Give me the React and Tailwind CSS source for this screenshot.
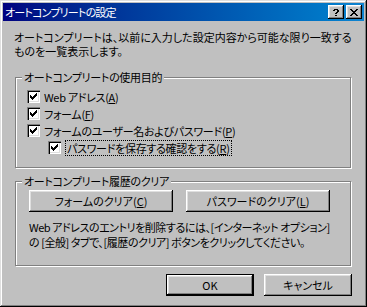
import React from "react";

const px = (cells) =>
  cells.map(([x, y, w = 1], i) => <rect key={i} x={x} y={y} width={w} height={1} />);

function CheckMark() {
  const cells = [
    [6, 0], [5, 1, 2], [0, 2], [4, 2, 3], [0, 3, 2], [3, 3, 3], [0, 4, 5], [1, 5, 3], [2, 6],
  ];
  return (
    <svg width="7" height="7" viewBox="0 0 7 7" shapeRendering="crispEdges" fill="#000">
      {px(cells)}
    </svg>
  );
}

function Checkbox() {
  return (
    <span className="w-[13px] h-[13px] shrink-0 bg-white flex items-center justify-center shadow-[inset_1px_1px_#808080,inset_2px_2px_#000,inset_-1px_-1px_#fff,inset_-2px_-2px_#dfdfdf]">
      <CheckMark />
    </span>
  );
}

function U({ children }) {
  return <span className="underline underline-offset-[1px]">{children}</span>;
}

function CheckRow({ children, indent }) {
  return (
    <div className={"h-[17px] flex items-center gap-[4px] " + (indent ? "ml-[21px]" : "")}>
      <Checkbox />
      {children}
    </div>
  );
}

function WinButton({ children, w, isDefault }) {
  const bevel =
    "shadow-[inset_-1px_-1px_#000,inset_1px_1px_#fff,inset_-2px_-2px_#808080,inset_2px_2px_#dfdfdf]";
  if (isDefault) {
    return (
      <div className={"h-[22px] border border-black flex " + w}>
        <div className={"flex-1 flex items-center justify-center " + bevel}>{children}</div>
      </div>
    );
  }
  return (
    <div className={"h-[22px] flex items-center justify-center " + w + " " + bevel}>{children}</div>
  );
}

function Group({ label, className, children }) {
  return (
    <div
      className={
        "relative border border-[#808080] shadow-[1px_1px_0_#fff,inset_1px_1px_0_#fff] " + className
      }
    >
      <span className="absolute -top-[8px] left-[6px] px-[2px] bg-[#c0c0c0] leading-[14px] tracking-[-0.3px]">
        {label}
      </span>
      {children}
    </div>
  );
}

function CaptionButton({ children }) {
  return (
    <div className="w-[16px] h-[14px] bg-[#c0c0c0] flex items-center justify-center shadow-[inset_-1px_-1px_#000,inset_1px_1px_#fff,inset_-2px_-2px_#808080,inset_2px_2px_#dfdfdf]">
      {children}
    </div>
  );
}

export default function App() {
  const closeCells = [
    [0, 0, 2], [6, 0, 2], [1, 1, 2], [5, 1, 2], [2, 2, 4], [3, 3, 2], [2, 4, 4], [1, 5, 2], [5, 5, 2], [0, 6, 2], [6, 6, 2],
  ];
  const helpCells = [
    [1, 0, 4], [0, 1, 2], [4, 1, 2], [4, 2, 2], [3, 3, 2], [2, 4, 2], [2, 6, 2],
  ];
  return (
    <div className="w-[367px] h-[307px] bg-[#c0c0c0] p-[3px] flex flex-col text-black text-[11px] whitespace-nowrap font-['Noto_Sans_CJK_JP',sans-serif] [font-feature-settings:'palt'] shadow-[inset_-1px_-1px_#000,inset_1px_1px_#dfdfdf,inset_-2px_-2px_#808080,inset_2px_2px_#fff]">
      <div className="h-[18px] flex items-center pl-[2px] pr-[2px] bg-gradient-to-r from-[#000080] to-[#1084d0]">
        <span className="text-white leading-[14px] tracking-[-0.8px]">オートコンプリートの設定</span>
        <div className="ml-auto flex gap-[2px]">
          <CaptionButton>
            <svg width="6" height="7" viewBox="0 0 6 7" shapeRendering="crispEdges" fill="#000">
              {px(helpCells)}
            </svg>
          </CaptionButton>
          <CaptionButton>
            <svg width="8" height="7" viewBox="0 0 8 7" shapeRendering="crispEdges" fill="#000">
              {px(closeCells)}
            </svg>
          </CaptionButton>
        </div>
      </div>

      <div className="flex-1 flex flex-col pl-[11px] pr-[12px] pt-[9px]">
        <div className="flex flex-col leading-[14px]">
          <span className="h-[14px]">オートコンプリートは、以前に入力した設定内容から可能な限り一致する</span>
          <span className="h-[14px]">ものを一覧表示します。</span>
        </div>

        <Group label="オートコンプリートの使用目的" className="mt-[19px] ml-[1px] w-[336px] h-[91px]">
          <div className="pt-[10px] pl-[11px] flex flex-col leading-[14px] tracking-[-0.3px]">
            <CheckRow>
              <span>
                Web アドレス(<U>A</U>)
              </span>
            </CheckRow>
            <CheckRow>
              <span>
                フォーム(<U>F</U>)
              </span>
            </CheckRow>
            <CheckRow>
              <span>
                フォームのユーザー名およびパスワード(<U>P</U>)
              </span>
            </CheckRow>
            <CheckRow indent>
              <span className="border border-dotted border-black px-[1px] leading-[14px]">
                パスワードを保存する確認をする(<U>R</U>)
              </span>
            </CheckRow>
          </div>
        </Group>

        <Group label="オートコンプリート履歴のクリア" className="mt-[13px] ml-[1px] w-[336px] h-[85px]">
          <div className="pt-[8px] pl-[13px] flex flex-col">
            <div className="flex gap-[13px]">
              <WinButton w="w-[144px]">
                <span>
                  フォームのクリア(<U>C</U>)
                </span>
              </WinButton>
              <WinButton w="w-[144px]">
                <span>
                  パスワードのクリア(<U>L</U>)
                </span>
              </WinButton>
            </div>
            <div className="mt-[8px] flex flex-col leading-[15px] tracking-[-0.45px]">
              <span className="h-[15px]">Web アドレスのエントリを削除するには、[インターネット オプション]</span>
              <span className="h-[15px]">の [全般] タブで、[履歴のクリア] ボタンをクリックしてください。</span>
            </div>
          </div>
        </Group>

        <div className="mt-[8px] flex justify-end gap-[10px]">
          <WinButton w="w-[88px]" isDefault>
            OK
          </WinButton>
          <WinButton w="w-[88px]">キャンセル</WinButton>
        </div>
      </div>
    </div>
  );
}
